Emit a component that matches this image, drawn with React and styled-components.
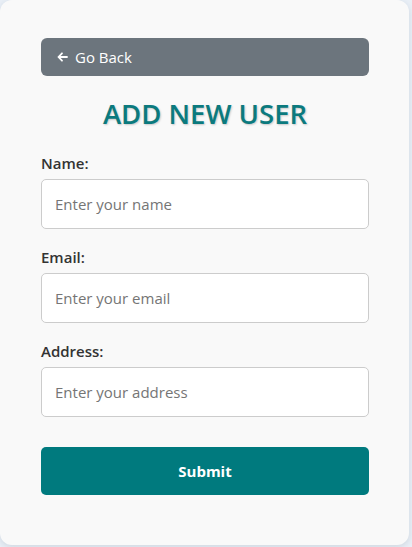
import React from "react";
import styled, { createGlobalStyle } from "styled-components";

const Global = createGlobalStyle`
  html, body { margin: 0; padding: 0; }
  body {
    background: #e9eff6;
    font-family: "Open Sans", "Liberation Sans", sans-serif;
  }
  * { box-sizing: border-box; }
`;

const Page = styled.div`
  padding: 0 3px 2px 0;
`;

const Card = styled.div`
  width: 409px;
  min-height: 545px;
  background: #f9f9f9;
  border-radius: 12px;
  box-shadow: 0 2px 6px rgba(60, 80, 110, 0.15);
  padding: 38px 40px 40px 41px;
`;

const BackButton = styled.button`
  display: flex;
  align-items: center;
  gap: 7px;
  width: 100%;
  height: 38px;
  border: none;
  border-radius: 6px;
  background: #6c757d;
  color: #fff;
  font-family: inherit;
  font-size: 15px;
  padding: 0 16px;
  cursor: pointer;
`;

const Title = styled.h2`
  margin: 20px 0 21px;
  text-align: center;
  color: #0b7a7e;
  font-size: 27.5px;
  font-weight: 600;
  line-height: 36px;
  text-shadow: 1px 1px 2px rgba(0, 0, 0, 0.2);
`;

const Field = styled.div`
  display: flex;
  flex-direction: column;
  margin-bottom: 18px;
`;

const Label = styled.label`
  font-size: 15px;
  font-weight: 600;
  color: #333;
  line-height: 20px;
  margin-bottom: 6px;
`;

const Input = styled.input`
  height: 50px;
  border: 1px solid #ccc;
  border-radius: 5px;
  background: #fff;
  padding: 0 13px;
  font-family: inherit;
  font-size: 15px;
  color: #333;
  &::placeholder { color: #757575; }
`;

const Submit = styled.button`
  width: 100%;
  height: 48px;
  margin-top: 12px;
  border: none;
  border-radius: 5px;
  background: #007a7e;
  color: #fff;
  font-family: inherit;
  font-size: 15px;
  font-weight: 700;
  cursor: pointer;
`;

const Arrow = () => (
  <svg width="11" height="12" viewBox="0 0 11 12" fill="none" stroke="#fff" strokeWidth="1.8" strokeLinecap="round" strokeLinejoin="round">
    <path d="M10 6H1.5M5 2.3L1.5 6 5 9.7" />
  </svg>
);

const fields = [
  { id: "name", label: "Name:", ph: "Enter your name" },
  { id: "email", label: "Email:", ph: "Enter your email" },
  { id: "address", label: "Address:", ph: "Enter your address" },
];

export default function App() {
  return (
    <>
      <Global />
      <Page>
        <Card>
          <BackButton>
            <Arrow />
            Go Back
          </BackButton>
          <Title>ADD NEW USER</Title>
          <form onSubmit={(e) => e.preventDefault()}>
            {fields.map((f) => (
              <Field key={f.id}>
                <Label htmlFor={f.id}>{f.label}</Label>
                <Input id={f.id} placeholder={f.ph} />
              </Field>
            ))}
            <Submit type="submit">Submit</Submit>
          </form>
        </Card>
      </Page>
    </>
  );
}
